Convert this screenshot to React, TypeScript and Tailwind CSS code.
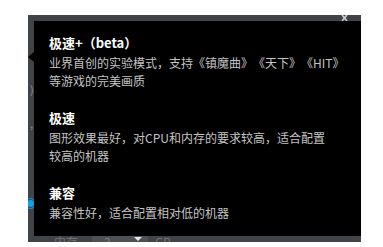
import React from "react";

const font = { fontFamily: '"Noto Sans CJK SC", "Noto Sans", sans-serif' };

function Block({ title, lines }: { title: string; lines: string[] }) {
  return (
    <div className="flex flex-col">
      <div className="text-[13px] leading-[18px] font-bold text-white">{title}</div>
      <div className="mt-[2px] text-[12px] leading-[18px] text-[#c4c4c4] whitespace-nowrap">
        {lines.map((l, i) => (
          <div key={i}>{l}</div>
        ))}
      </div>
    </div>
  );
}

export default function App() {
  return (
    <div className="w-[383px] h-[247px] bg-white pt-[15px] pl-[28px] [text-spacing-trim:space-all]" style={font}>
      <div className="w-[333px] h-[227px] bg-[#404348] overflow-hidden flex flex-col">
        {/* top strip with close glyph */}
        <div className="h-[6px] flex justify-end items-start pr-[13px]">
          <svg width="7" height="6" viewBox="0 0 7 6">
            <path d="M1 0 L6 6 M6 0 L1 6" stroke="#d0d0d0" strokeWidth="1.6" />
          </svg>
        </div>
        <div className="flex flex-1 min-h-0">
          {/* left background fragments */}
          <div className="w-[6px] flex flex-col items-start overflow-hidden">
            <div className="mt-[62px] text-[11px] leading-[12px] text-[#8e9196] pl-[2px]">)</div>
            <div className="mt-[22px] text-[11px] leading-[12px] text-[#8e9196] pl-[2px]">,</div>
            <div className="mt-[69px] -ml-[3px] w-[11px] h-[11px] rounded-full border border-[#1a9de0] flex items-center justify-center">
              <div className="w-[7px] h-[7px] rounded-full bg-[#12a2e6]" />
            </div>
          </div>
          {/* tooltip */}
          <div className="relative flex-1 bg-black pt-[13px] pl-[15px] pr-[10px] flex flex-col gap-[19px]">
            <div className="absolute -left-[6px] top-[31px] w-0 h-0 border-y-[5px] border-y-transparent border-r-[6px] border-r-black" />
            <Block
              title="极速+（beta）"
              lines={["业界首创的实验模式，支持《镇魔曲》《天下》《HIT》", "等游戏的完美画质"]}
            />
            <Block
              title="极速"
              lines={["图形效果最好，对CPU和内存的要求较高，适合配置", "较高的机器"]}
            />
            <Block title="兼容" lines={["兼容性好，适合配置相对低的机器"]} />
          </div>
        </div>
        {/* bottom strip with clipped controls */}
        <div className="h-[6px] flex items-start overflow-hidden text-[12px] leading-[14px] text-[#6f7277]">
          <div className="w-[26px] -mt-[1px]"></div>
          <div className="-mt-[1px]">内存</div>
          <div className="ml-[14px] w-[56px] h-[6px] bg-[#4e5156] flex items-start">
            <div className="ml-[12px] -mt-[1px] text-[#7a7d82]">3</div>
            <div className="ml-[23px] mt-[1px] w-0 h-0 border-x-[4px] border-x-transparent border-t-[4px] border-t-[#e6e6e6]" />
          </div>
          <div className="ml-[7px] -mt-[1px]">GB</div>
        </div>
      </div>
    </div>
  );
}
